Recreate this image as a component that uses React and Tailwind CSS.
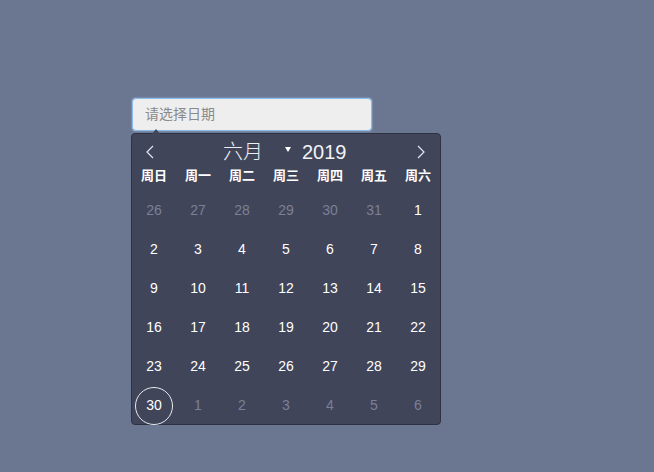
const weekdays = ["周日", "周一", "周二", "周三", "周四", "周五", "周六"];

const buildDays = () => {
  const days = [];
  [26, 27, 28, 29, 30, 31].forEach((d) => days.push({ d, muted: true }));
  for (let d = 1; d <= 30; d++) days.push({ d, muted: false, selected: d === 30 });
  [1, 2, 3, 4, 5, 6].forEach((d) => days.push({ d, muted: true }));
  return days;
};

const Chevron = ({ dir }) => (
  <svg width="8" height="14" viewBox="0 0 8 14" fill="none">
    <polyline
      points={dir === "left" ? "7,1 1,7 7,13" : "1,1 7,7 1,13"}
      stroke="#e5e7ef"
      strokeWidth="1.2"
    />
  </svg>
);

const App = () => {
  const days = buildDays();

  return (
    <div
      className="min-h-[472px] w-full bg-[#6b7790] pt-[98px] pl-[131px]"
      style={{ fontFamily: '"Liberation Sans", Arial, "Noto Sans CJK SC", sans-serif' }}
    >
      <div className="ml-px w-[240px] h-[33px] rounded-[4px] border border-[#8dbbe8] bg-[#eeeeee] flex items-center pl-[12px] shadow-[0_0_2px_#9cc6f0]">
        <span className="text-[14px] text-[#8a8a8a]">请选择日期</span>
      </div>

      <div className="relative mt-[2px] w-[310px] h-[292px] rounded-[4px] border border-[#2f3242] bg-[#40455a]">
        <div className="absolute -top-[5px] left-[20px] w-0 h-0 border-l-[4px] border-r-[4px] border-b-[5px] border-l-transparent border-r-transparent border-b-[#40455a]" />

        <div className="h-[34px] flex items-center px-[13px] pt-[1px]">
          <button className="w-[10px] flex justify-center">
            <Chevron dir="left" />
          </button>
          <div className="flex items-center ml-[68px]">
            <div className="w-[68px] flex items-center justify-between">
              <span className="text-[20px] font-light text-[#eceef4] leading-none">六月</span>
              <svg width="6" height="5" viewBox="0 0 6 5" className="mb-[5px]">
                <polygon points="0,0 6,0 3,5" fill="#ffffff" />
              </svg>
            </div>
            <span className="ml-[11px] text-[20px] text-[#f2f3f7] leading-none">2019</span>
          </div>
          <div className="flex-1" />
          <button className="w-[10px] flex justify-center mr-[1px]">
            <Chevron dir="right" />
          </button>
        </div>

        <div className="grid grid-cols-[repeat(7,44px)] h-[14px] items-center">
          {weekdays.map((w) => (
            <div key={w} className="text-center text-[13px] font-bold text-white leading-none">
              {w}
            </div>
          ))}
        </div>

        <div className="mt-[9px] grid grid-cols-[repeat(7,44px)] auto-rows-[39px]">
          {days.map((day, i) => (
            <div key={i} className="flex items-center justify-center">
              {day.selected ? (
                <div className="w-[38px] h-[38px] rounded-full border border-[#e8e9ee] flex items-center justify-center text-[14px] text-white">
                  {day.d}
                </div>
              ) : (
                <span className={`text-[14px] ${day.muted ? "text-[#7c8095]" : "text-white"}`}>
                  {day.d}
                </span>
              )}
            </div>
          ))}
        </div>
      </div>
    </div>
  );
};

export default App;
